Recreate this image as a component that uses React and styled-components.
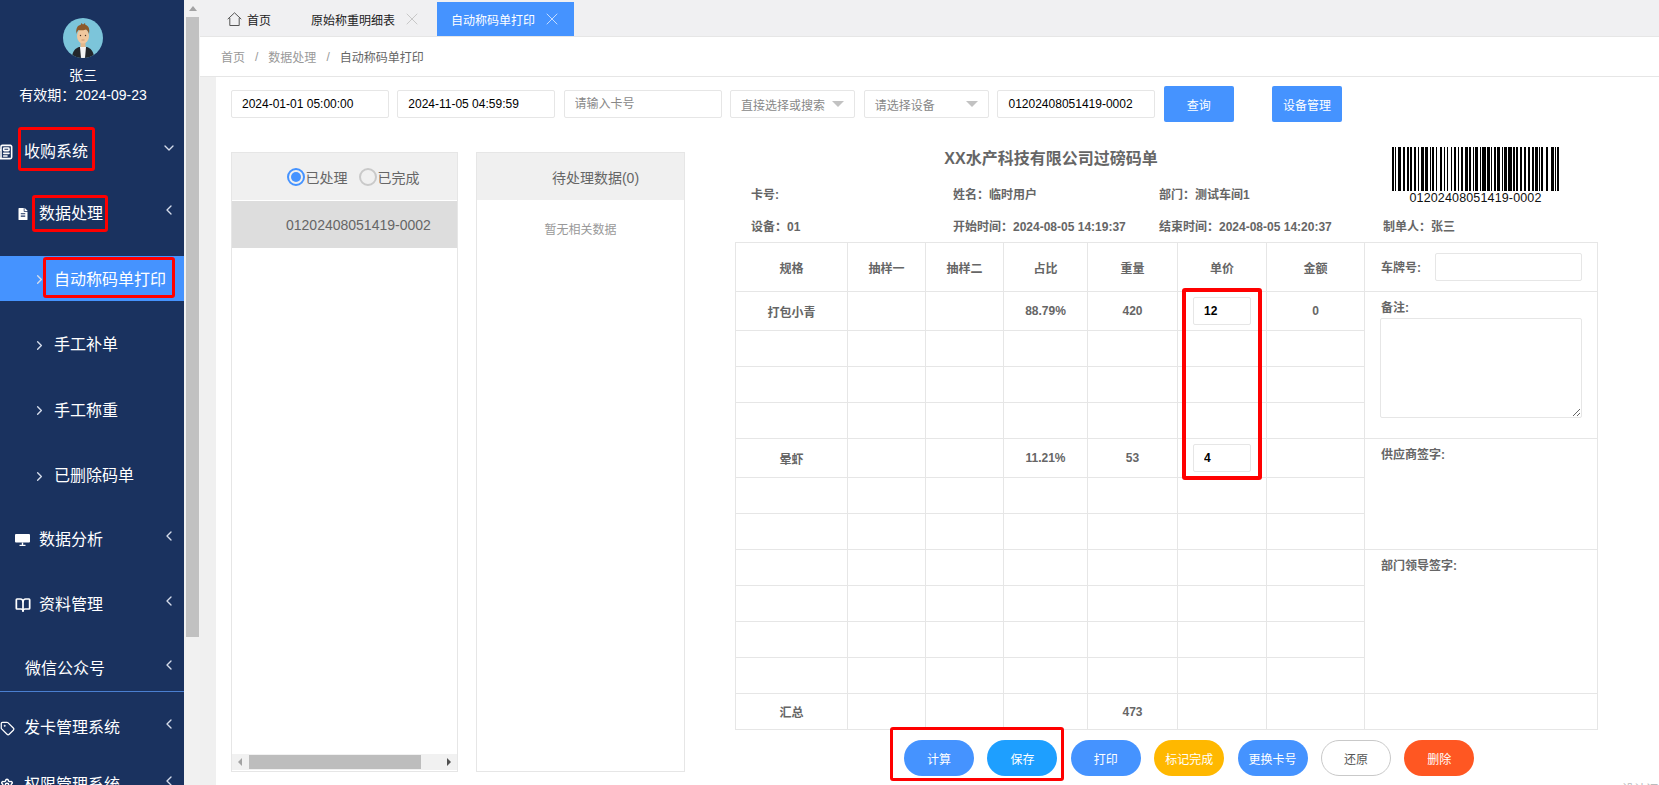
import React from "react";
import styled, { createGlobalStyle } from "styled-components";
import {
    ChevronDown,
    ChevronLeft,
    ChevronRight,
    BookOpen,
    Newspaper,
    Tag,
    Settings,
    X,
} from "lucide-react";
import { FaFileAlt } from "react-icons/fa";

const GlobalStyle = createGlobalStyle`
    * { box-sizing: border-box; }
    html, body { margin: 0; padding: 0; height: 100%; overflow: hidden; }
    body {
        font-family: "Liberation Sans", "Noto Sans CJK SC", sans-serif;
        font-size: 12px;
        color: #666;
        background: #fff;
    }
`;

const BLUE = "#4593ff";

// code128 bars for 01202408051419-0002
const BARS = [
    "11010011100", // start C
    "11001101100", // 01
    "11001001110", // 20
    "11100101100", // 24
    "10001100100", // 08
    "10001001100", // 05
    "10011001110", // 14
    "11001011100", // 19
    "10111101110", // code B
    "10011011100", // -
    "10111011110", // code C
    "11011001100", // 00
    "11001100110", // 02
    "11101011000", // check
    "1100011101011", // stop
].join("");

const Barcode = () => (
    <svg width="167" height="44" viewBox="0 0 167 44" shapeRendering="crispEdges">
        {BARS.split("").map((bit, i) =>
            bit === "1" ? <rect key={i} x={i} y="0" width="1" height="44" fill="#000" /> : null
        )}
    </svg>
);

const Avatar = () => (
    <svg width="40" height="40" viewBox="0 0 40 40">
        <defs>
            <clipPath id="avatar-clip">
                <circle cx="20" cy="20" r="20" />
            </clipPath>
        </defs>
        <g clipPath="url(#avatar-clip)">
            <rect width="40" height="40" fill="#7cc5da" />
            <path d="M9 40c0-7 4-10 7-11h8c3 1 7 4 7 11z" fill="#23262b" />
            <path d="M17 29h6l-1 11h-4z" fill="#f4f4f4" />
            <rect x="17.5" y="23" width="5" height="6" fill="#e2b88c" />
            <ellipse cx="20" cy="18" rx="6" ry="7.5" fill="#f0c79d" />
            <path d="M13.5 16c-1-5 1-9 4-9l1-2 1.5 1.5L22 5l.5 2c3 .5 4.500 4 3.500 9-1-3-2-4-3-4.500-3 1-6 1-7.500.5-1 1-1.500 2-2.500 4z" fill="#8d5a2b" />
            <circle cx="17.5" cy="17.500" r=".7" fill="#4a3324" />
            <circle cx="22.500" cy="17.500" r=".7" fill="#4a3324" />
            <path d="M18.500 22h3" stroke="#b9825a" strokeWidth=".7" />
        </g>
    </svg>
);

const BoardIcon = () => (
    <svg width="15" height="13" viewBox="0 0 15 13">
        <path d="M1 1h13a1 1 0 0 1 1 1v6.500a1 1 0 0 1-1 1H1a1 1 0 0 1-1-1V2a1 1 0 0 1 1-1z" fill="#fff" />
        <rect x="6.800" y="9.500" width="1.400" height="2.500" fill="#fff" />
        <rect x="4.500" y="11.800" width="6" height="1.200" fill="#fff" />
    </svg>
);

const HomeIcon = () => (
    <svg width="15" height="14" viewBox="0 0 15 14" fill="none" stroke="#555" strokeWidth="1">
        <path d="M.7 7.200 7.500 .8l6.800 6.400" />
        <path d="M2.800 6v7.500h9.400V6" />
    </svg>
);

const MENU_SUB = ["自动称码单打印", "手工补单", "手工称重", "已删除码单"];

const ROWS = [
    { name: "打包小青", a: "88.79%", b: "420", price: "12", amount: "0", height: 39 },
    { height: 36 },
    { height: 36 },
    { height: 36 },
    { name: "晕虾", a: "11.21%", b: "53", price: "4", height: 39 },
    { height: 36 },
    { height: 36 },
    { height: 36 },
    { height: 36 },
    { height: 36 },
    { height: 36 },
    { name: "汇总", b: "473", height: 36 },
];

const SIDE_CELLS = {
    0: { rowSpan: 4, label: "备注:", note: true },
    4: { rowSpan: 3, label: "供应商签字:" },
    7: { rowSpan: 4, label: "部门领导签字:" },
    11: { rowSpan: 1 },
};

const App = () => {
    return (
        <>
            <GlobalStyle />
            <Page>
                <Sidebar>
                    <Profile>
                        <Avatar />
                        <UserName>张三</UserName>
                        <Validity>有效期：2024-09-23</Validity>
                    </Profile>

                    <MenuRow $height={62}>
                        <MenuIcon $shift={-3}><Newspaper size={16} strokeWidth={2.4} /></MenuIcon>
                        <Marked $t={-13} $r={-7} $b={-7} $l={-6}>收购系统</Marked>
                        <Caret><ChevronDown size={16} strokeWidth={2} /></Caret>
                    </MenuRow>
                    <MenuRow $height={62} $indent={15}>
                        <MenuIcon $shift={2}><FaFileAlt size={12} /></MenuIcon>
                        <Marked $t={-7} $r={-5} $b={-6} $l={-7}>数据处理</Marked>
                        <Caret><ChevronLeft size={16} strokeWidth={2} /></Caret>
                    </MenuRow>
                    <SubMenu>
                        {MENU_SUB.map((item, i) => (
                            <SubRow key={item} $active={i === 0}>
                                <ChevronRight size={15} strokeWidth={2.2} />
                                {i === 0 ? (
                                    <Marked $t={-11} $r={-9} $b={-6} $l={-11}>{item}</Marked>
                                ) : (
                                    <span>{item}</span>
                                )}
                            </SubRow>
                        ))}
                    </SubMenu>
                    <MenuRow $height={65} $indent={15}>
                        <MenuIcon><BoardIcon /></MenuIcon>
                        <span>数据分析</span>
                        <Caret><ChevronLeft size={16} strokeWidth={2} /></Caret>
                    </MenuRow>
                    <MenuRow $height={65} $indent={15}>
                        <MenuIcon><BookOpen size={16} strokeWidth={2.6} /></MenuIcon>
                        <span>资料管理</span>
                        <Caret><ChevronLeft size={16} strokeWidth={2} /></Caret>
                    </MenuRow>
                    <WechatRow $height={44} $indent={25}>
                        <span>微信公众号</span>
                        <Caret><ChevronLeft size={16} strokeWidth={2} /></Caret>
                    </WechatRow>
                    <MenuDivider />
                    <MenuRow $height={72}>
                        <MenuIcon><Tag size={15} strokeWidth={2} /></MenuIcon>
                        <span>发卡管理系统</span>
                        <Caret><ChevronLeft size={16} strokeWidth={2} /></Caret>
                    </MenuRow>
                    <MenuRow $height={42}>
                        <MenuIcon><Settings size={14} strokeWidth={2.4} /></MenuIcon>
                        <span>权限管理系统</span>
                        <Caret><ChevronLeft size={16} strokeWidth={2} /></Caret>
                    </MenuRow>
                </Sidebar>

                <PageScroll>
                    <ScrollArrow />
                    <ScrollThumb />
                </PageScroll>

                <Main>
                    <TabBar>
                        <HomeTab>
                            <HomeIcon />
                            <span>首页</span>
                        </HomeTab>
                        <Tab>
                            <span>原始称重明细表</span>
                            <X size={20} strokeWidth={1.1} color="#c4c4c4" />
                        </Tab>
                        <Tab $active>
                            <span>自动称码单打印</span>
                            <X size={20} strokeWidth={1.1} color="#cfe2ff" />
                        </Tab>
                    </TabBar>

                    <Breadcrumb>
                        <Crumb>首页</Crumb>
                        <Slash>/</Slash>
                        <Crumb>数据处理</Crumb>
                        <Slash>/</Slash>
                        <Crumb $current>自动称码单打印</Crumb>
                    </Breadcrumb>

                    <Body>
                        <Content>
                            <Toolbar>
                                <TextField defaultValue="2024-01-01 05:00:00" />
                                <TextField defaultValue="2024-11-05 04:59:59" />
                                <TextField placeholder="请输入卡号" />
                                <SelectBox>直接选择或搜索<SelectCaret /></SelectBox>
                                <SelectBox>请选择设备<SelectCaret /></SelectBox>
                                <TextField defaultValue="01202408051419-0002" />
                                <ToolButton>查询</ToolButton>
                                <ToolButton $gap={30}>设备管理</ToolButton>
                            </Toolbar>

                            <Workspace>
                                <ListPanel $width={227}>
                                    <PanelHead $shift={17}>
                                        <RadioItem>
                                            <Radio $on />
                                            已处理
                                        </RadioItem>
                                        <RadioItem>
                                            <Radio />
                                            已完成
                                        </RadioItem>
                                    </PanelHead>
                                    <ListRow>01202408051419-0002</ListRow>
                                    <PanelFill />
                                    <HScroll>
                                        <HArrow />
                                        <HThumb />
                                        <HArrow $right />
                                    </HScroll>
                                </ListPanel>

                                <ListPanel $width={209}>
                                    <PanelHead $shift={30}>待处理数据(0)</PanelHead>
                                    <EmptyText>暂无相关数据</EmptyText>
                                </ListPanel>

                                <Receipt>
                                    <ReceiptHead>
                                        <ReceiptTitle>XX水产科技有限公司过磅码单</ReceiptTitle>
                                        <BarcodeBox>
                                            <Barcode />
                                            <BarcodeText>01202408051419-0002</BarcodeText>
                                        </BarcodeBox>
                                        <InfoItem $col={1} $row={2}>卡号:</InfoItem>
                                        <InfoItem $col={2} $row={2}>姓名：临时用户</InfoItem>
                                        <InfoItem $col={3} $row={2}>部门：测试车间1</InfoItem>
                                        <InfoItem $col={1} $row={3}>设备：01</InfoItem>
                                        <InfoItem $col={2} $row={3}>开始时间：2024-08-05 14:19:37</InfoItem>
                                        <InfoItem $col={3} $row={3}>结束时间：2024-08-05 14:20:37</InfoItem>
                                        <InfoItem $col={4} $row={3}>制单人：张三</InfoItem>
                                    </ReceiptHead>

                                    <WeighTable>
                                        <colgroup>
                                            <col width="112" />
                                            <col width="78" />
                                            <col width="78" />
                                            <col width="84" />
                                            <col width="90" />
                                            <col width="89" />
                                            <col width="98" />
                                            <col width="233" />
                                        </colgroup>
                                        <tbody>
                                            <HeadRow>
                                                <th>规格</th>
                                                <th>抽样一</th>
                                                <th>抽样二</th>
                                                <th>占比</th>
                                                <th>重量</th>
                                                <th>单价</th>
                                                <th>金额</th>
                                                <SideCell>
                                                    <PlateRow>
                                                        <span>车牌号:</span>
                                                        <PlateInput />
                                                    </PlateRow>
                                                </SideCell>
                                            </HeadRow>
                                            {ROWS.map((row, i) => (
                                                <DataRow key={i} $height={row.height}>
                                                    <td>{row.name}</td>
                                                    <td />
                                                    <td />
                                                    <td>{row.a}</td>
                                                    <td>{row.b}</td>
                                                    <PriceCell>
                                                        {row.price && <PriceInput defaultValue={row.price} />}
                                                        {i === 0 && <PriceMark />}
                                                    </PriceCell>
                                                    <td>{row.amount}</td>
                                                    {SIDE_CELLS[i] && (
                                                        <SideCell rowSpan={SIDE_CELLS[i].rowSpan}>
                                                            {SIDE_CELLS[i].label && <SideLabel>{SIDE_CELLS[i].label}</SideLabel>}
                                                            {SIDE_CELLS[i].note && <NoteArea />}
                                                        </SideCell>
                                                    )}
                                                </DataRow>
                                            ))}
                                        </tbody>
                                    </WeighTable>

                                    <Actions>
                                        <MarkedGroup>
                                            <RoundButton>计算</RoundButton>
                                            <RoundButton $bg="#1e9fff">保存</RoundButton>
                                        </MarkedGroup>
                                        <RoundButton>打印</RoundButton>
                                        <RoundButton $bg="#ffb800">标记完成</RoundButton>
                                        <RoundButton>更换卡号</RoundButton>
                                        <RoundButton $plain>还原</RoundButton>
                                        <RoundButton $bg="#ff5722">删除</RoundButton>
                                    </Actions>
                                </Receipt>
                            </Workspace>
                        </Content>
                    </Body>
                </Main>
                <Footnote>设计订制</Footnote>
            </Page>
        </>
    );
};

export default App;

const Page = styled.div`
    position: relative;
    display: flex;
    width: 100%;
    height: 100vh;
    overflow: hidden;
`;

const Sidebar = styled.aside`
    flex: 0 0 184px;
    height: 100%;
    overflow: hidden;
    background: #1a325f;
    color: #fff;
    font-size: 16px;
`;

const Profile = styled.div`
    display: flex;
    flex-direction: column;
    align-items: center;
    padding: 18px 18px 0 0;
    margin-bottom: 16px;
    font-size: 14px;
    svg { display: block; }
`;

const UserName = styled.div`
    margin-top: 7px;
    line-height: 20px;
`;

const Validity = styled.div`
    line-height: 20px;
`;

const MenuRow = styled.div`
    position: relative;
    display: flex;
    align-items: center;
    height: ${(p) => p.$height}px;
    padding-left: ${(p) => p.$indent || 0}px;
    line-height: 24px;
`;

const WechatRow = styled(MenuRow)`
    margin-top: 10px;
`;

const MenuIcon = styled.span`
    display: inline-flex;
    align-items: center;
    flex: 0 0 24px;
    margin-left: ${(p) => p.$shift || 0}px;
    margin-right: ${(p) => -(p.$shift || 0)}px;
`;

const Marked = styled.span`
    position: relative;
    display: inline-block;
    &::after {
        content: "";
        position: absolute;
        top: ${(p) => p.$t}px;
        right: ${(p) => p.$r}px;
        bottom: ${(p) => p.$b}px;
        left: ${(p) => p.$l}px;
        border: 3px solid #f00;
        border-radius: 3px;
    }
`;

const Caret = styled.span`
    position: absolute;
    right: 7px;
    top: 50%;
    display: flex;
    margin-top: -12px;
    color: #d5dcea;
`;

const SubMenu = styled.div`
    display: flex;
    flex-direction: column;
    gap: 20.5px;
    padding: 11px 0 9.5px;
`;

const SubRow = styled.div`
    display: flex;
    align-items: center;
    gap: 7px;
    height: 45px;
    padding: 2px 0 0 32px;
    line-height: 24px;
    background: ${(p) => (p.$active ? BLUE : "transparent")};
    svg { color: #d5dcea; flex: none; }
`;

const MenuDivider = styled.div`
    height: 1px;
    background: #4a7fd0;
`;

const PageScroll = styled.div`
    position: relative;
    flex: 0 0 16px;
    padding-left: 2px;
    background: #f1f1f1;
`;

const ScrollArrow = styled.div`
    width: 0;
    height: 0;
    margin: 6px 0 0 3px;
    border-left: 4px solid transparent;
    border-right: 4px solid transparent;
    border-bottom: 5px solid #a3a3a3;
`;

const ScrollThumb = styled.div`
    width: 13px;
    height: 620px;
    margin-top: 6px;
    background: #c1c1c1;
`;

const Main = styled.main`
    flex: 1;
    min-width: 0;
    display: flex;
    flex-direction: column;
`;

const TabBar = styled.div`
    display: flex;
    flex: 0 0 36px;
    gap: 6px;
    padding: 2px 0 0 13px;
    background: #f0f0f2;
    border-bottom: 1px solid #e6e6e6;
`;

const Tab = styled.div`
    display: flex;
    align-items: center;
    gap: 7px;
    padding: 0 ${(p) => (p.$active ? 12 : 9)}px 0 14px;
    height: 34px;
    color: ${(p) => (p.$active ? "#fff" : "#222")};
    background: ${(p) => (p.$active ? BLUE : "transparent")};
`;

const HomeTab = styled(Tab)`
    gap: 5px;
    padding-right: 20px;
`;

const Breadcrumb = styled.div`
    display: flex;
    flex: 0 0 40px;
    align-items: center;
    padding-left: 21px;
    background: #fff;
    border-bottom: 1px solid #e6e6e6;
`;

const Crumb = styled.span`
    color: ${(p) => (p.$current ? "#666" : "#999")};
`;

const Slash = styled.span`
    margin: 0 10px;
    color: #999;
`;

const Body = styled.div`
    flex: 1;
    min-height: 0;
    padding-left: 16px;
    background: #f0f0f0;
`;

const Content = styled.div`
    height: 100%;
    padding: 9px 0 0 15px;
    background: #fff;
`;

const Toolbar = styled.div`
    display: flex;
    align-items: center;
    gap: 8.3px;
    height: 36px;
`;

const TextField = styled.input`
    width: 158px;
    height: 28px;
    padding: 0 10px;
    border: 1px solid #e6e6e6;
    border-radius: 2px;
    outline: none;
    font: inherit;
    color: #000;
    &::placeholder { color: #888; }
`;

const SelectBox = styled.div`
    display: flex;
    align-items: center;
    justify-content: space-between;
    width: 125.5px;
    height: 28px;
    padding: 0 10px;
    border: 1px solid #e6e6e6;
    border-radius: 2px;
    color: #888;
`;

const SelectCaret = styled.i`
    width: 0;
    height: 0;
    border-left: 6px solid transparent;
    border-right: 6px solid transparent;
    border-top: 6px solid #c2c2c2;
`;

const ToolButton = styled.button`
    width: 70px;
    height: 36px;
    margin-left: ${(p) => p.$gap || 0}px;
    border: none;
    border-radius: 2px;
    background: ${BLUE};
    color: #fff;
    font: inherit;
`;

const Workspace = styled.div`
    display: flex;
    align-items: flex-start;
    margin-top: 30px;
`;

const ListPanel = styled.section`
    display: flex;
    flex-direction: column;
    flex: 0 0 ${(p) => p.$width}px;
    height: 620px;
    margin-right: 18px;
    border: 1px solid #e6e6e6;
`;

const PanelHead = styled.div`
    display: flex;
    align-items: center;
    justify-content: center;
    gap: 11px;
    flex: 0 0 47px;
    padding-left: ${(p) => p.$shift}px;
    margin-bottom: 1px;
    background: #f0f0f0;
    font-size: 14px;
`;

const RadioItem = styled.label`
    display: flex;
    align-items: center;
    gap: 1px;
`;

const Radio = styled.span`
    display: flex;
    align-items: center;
    justify-content: center;
    width: 18px;
    height: 18px;
    border-radius: 50%;
    border: 2px solid ${(p) => (p.$on ? BLUE : "#c9c9c9")};
    &::after {
        content: "";
        width: 10px;
        height: 10px;
        border-radius: 50%;
        background: ${(p) => (p.$on ? BLUE : "transparent")};
    }
`;

const ListRow = styled.div`
    display: flex;
    align-items: center;
    flex: 0 0 47px;
    padding-left: 54px;
    background: #ddd;
    font-size: 14px;
`;

const PanelFill = styled.div`
    flex: 1;
`;

const HScroll = styled.div`
    display: flex;
    align-items: center;
    flex: 0 0 16px;
    margin-bottom: 1px;
    padding: 1px 3px;
    background: #f1f1f1;
`;

const HArrow = styled.i`
    width: 0;
    height: 0;
    margin-left: ${(p) => (p.$right ? "auto" : "3px")};
    margin-right: ${(p) => (p.$right ? "3px" : "0")};
    border-top: 4px solid transparent;
    border-bottom: 4px solid transparent;
    ${(p) =>
        p.$right
            ? "border-left: 4px solid #505050;"
            : "border-right: 4px solid #a3a3a3;"}
`;

const HThumb = styled.div`
    width: 172px;
    height: 14px;
    margin-left: 7px;
    background: #bdbdbd;
`;

const EmptyText = styled.div`
    padding-top: 19px;
    text-align: center;
    color: #999;
`;

const Receipt = styled.div`
    flex: 0 0 862px;
    margin: -5px 0 0 32px;
`;

const ReceiptHead = styled.div`
    display: grid;
    grid-template-columns: 202px 206px 224px 1fr;
    grid-template-rows: 32px 32px 32px;
    padding-left: 16px;
    font-weight: 700;
`;

const ReceiptTitle = styled.h2`
    grid-column: 1 / 4;
    grid-row: 1;
    margin: 0;
    padding-right: 32px;
    font-size: 16px;
    line-height: 24px;
    text-align: center;
    color: #666;
`;

const BarcodeBox = styled.div`
    grid-column: 4;
    grid-row: 1 / 3;
    margin-left: 9px;
    width: 167px;
    svg { display: block; }
`;

const BarcodeText = styled.div`
    font-weight: 400;
    font-size: 12.5px;
    line-height: 15px;
    letter-spacing: 0.15px;
    text-align: center;
    color: #111;
`;

const InfoItem = styled.div`
    grid-column: ${(p) => p.$col};
    grid-row: ${(p) => p.$row};
    line-height: 32px;
    white-space: nowrap;
`;

const WeighTable = styled.table`
    width: 862px;
    margin-top: -1px;
    border-collapse: collapse;
    table-layout: fixed;
    font-weight: 700;
    color: #666;
    th, td {
        border: 1px solid #e6e6e6;
        padding: 0;
        text-align: center;
        font-weight: 700;
    }
`;

const HeadRow = styled.tr`
    height: 49px;
`;

const DataRow = styled.tr`
    height: ${(p) => p.$height}px;
`;

const SideCell = styled.td`
    && {
        padding: 0 15px 0 16px;
        text-align: left;
        vertical-align: top;
    }
`;

const PlateRow = styled.div`
    display: flex;
    align-items: center;
    justify-content: space-between;
    height: 47px;
`;

const PlateInput = styled.input`
    width: 147px;
    height: 28px;
    border: 1px solid #e6e6e6;
    border-radius: 2px;
    outline: none;
`;

const SideLabel = styled.div`
    padding-top: 8px;
    line-height: 16px;
`;

const NoteArea = styled.textarea`
    display: block;
    width: 202px;
    height: 100px;
    margin: 2px 0 0 -1px;
    border: 1px solid #e6e6e6;
    border-radius: 2px;
    outline: none;
`;

const PriceCell = styled.td`
    position: relative;
`;

const PriceInput = styled.input`
    display: block;
    width: 58px;
    height: 28px;
    margin: 0 auto;
    padding: 0 10px;
    border: 1px solid #e6e6e6;
    border-radius: 2px;
    outline: none;
    font: inherit;
    font-weight: 700;
    color: #000;
`;

const PriceMark = styled.i`
    position: absolute;
    top: -4px;
    left: 4px;
    width: 80px;
    height: 192px;
    border: 4px solid #f00;
    border-radius: 3px;
    z-index: 2;
`;

const Actions = styled.div`
    display: flex;
    gap: 13.4px;
    margin-top: 10px;
    padding-left: 169px;
`;

const MarkedGroup = styled.div`
    position: relative;
    display: flex;
    gap: 13.4px;
    &::after {
        content: "";
        position: absolute;
        top: -13px;
        right: -7px;
        bottom: -5px;
        left: -14px;
        border: 3.5px solid #f00;
        border-radius: 3px;
    }
`;

const RoundButton = styled.button`
    width: 70px;
    height: 36px;
    padding: 0;
    border: ${(p) => (p.$plain ? "1px solid #c9c9c9" : "none")};
    border-radius: 18px;
    background: ${(p) => (p.$plain ? "#fff" : p.$bg || BLUE)};
    color: ${(p) => (p.$plain ? "#555" : "#fff")};
    font: inherit;
`;

const Footnote = styled.span`
    position: absolute;
    left: 1622px;
    top: 780px;
    color: #bbb;
`;
